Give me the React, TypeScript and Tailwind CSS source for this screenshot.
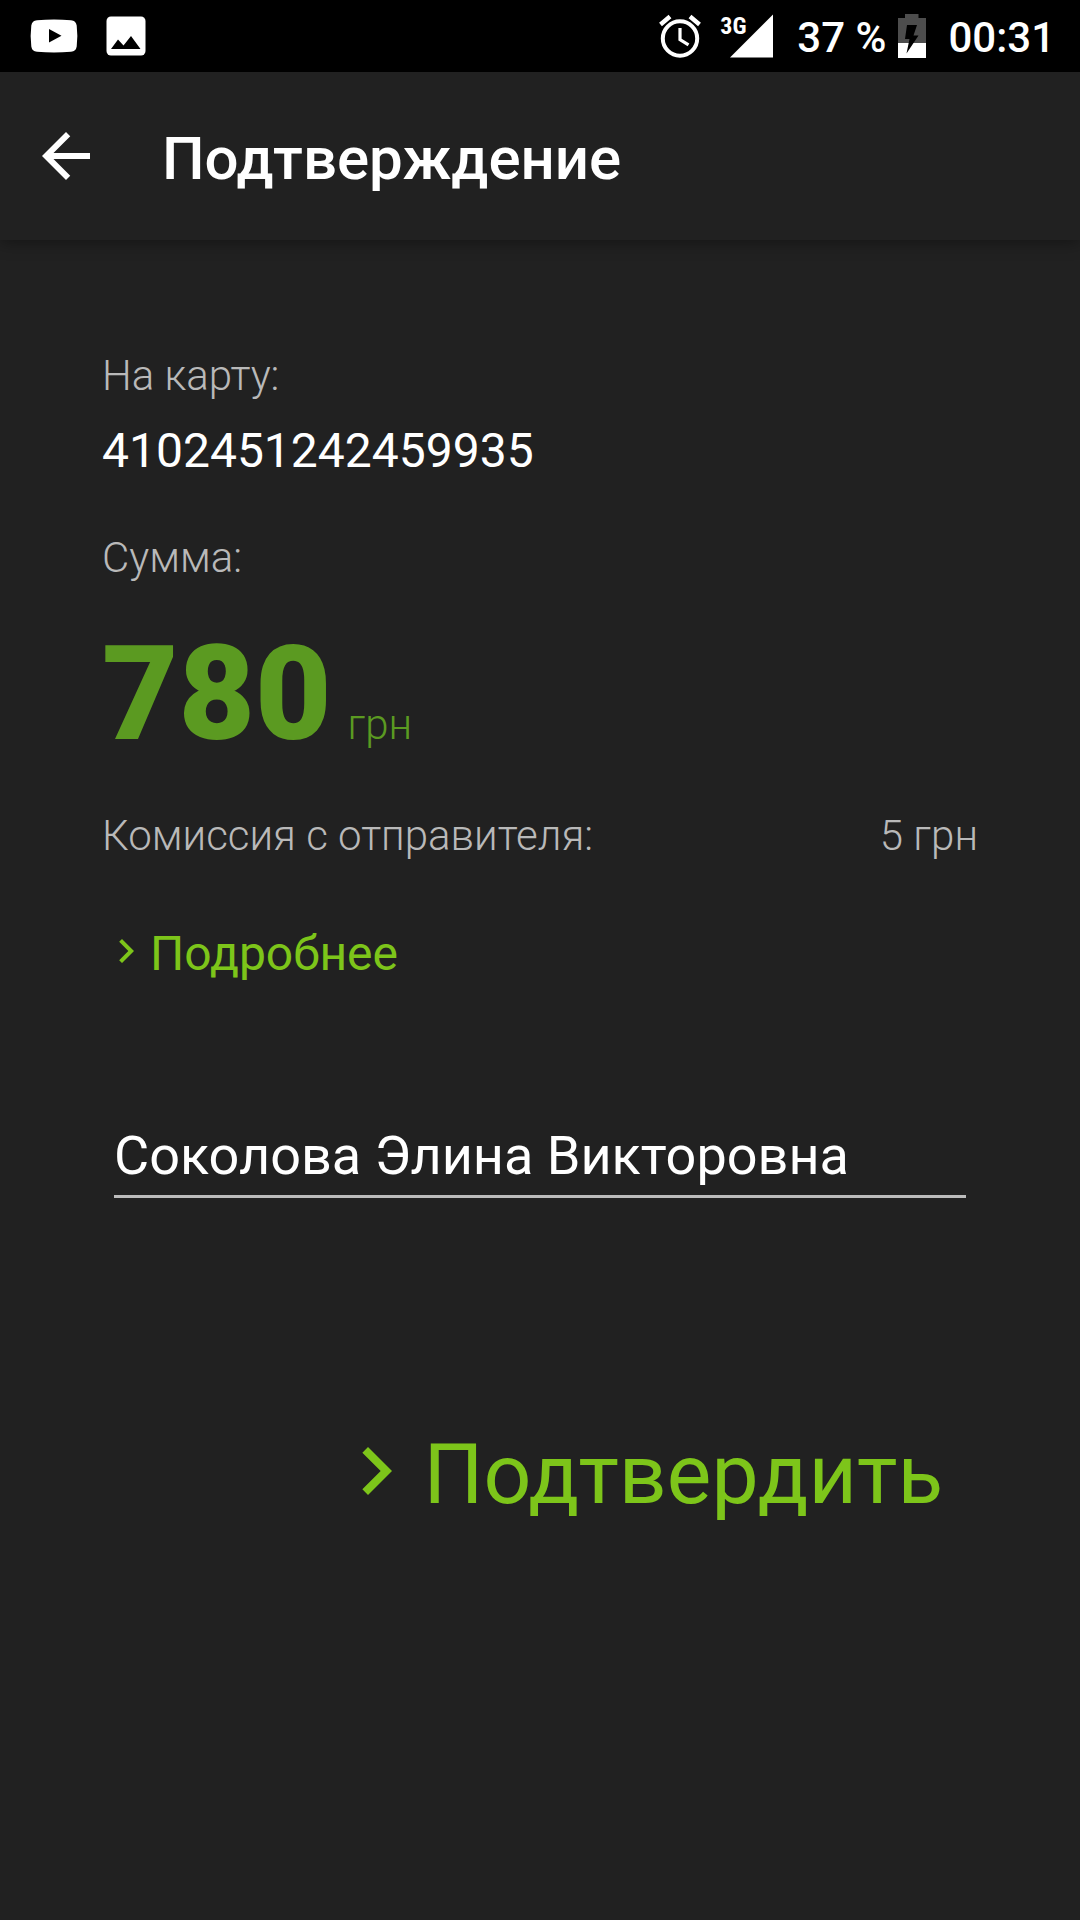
import React, { useState } from 'react';

interface IconProps {
  className?: string;
}

const ChevronIcon: React.FC<IconProps> = ({ className }) => (
  <svg className={className} viewBox="0 0 24 24" fill="currentColor" aria-hidden="true">
    <path d="M10 6 8.59 7.41 13.17 12l-4.58 4.59L10 18l6-6z" />
  </svg>
);

const BackIcon: React.FC<IconProps> = ({ className }) => (
  <svg className={className} viewBox="0 0 24 24" fill="currentColor" aria-hidden="true">
    <path d="M20 11H7.83l5.59-5.59L12 4l-8 8 8 8 1.41-1.41L7.83 13H20v-2z" />
  </svg>
);

const VideoIcon: React.FC<IconProps> = ({ className }) => (
  <svg className={className} viewBox="0 0 48 34" aria-hidden="true">
    <path
      fill="#fff"
      fillRule="evenodd"
      d="M7 1.2Q24 0 41 1.2Q46 1.6 46.7 6.5Q48 17 46.7 27.5Q46 32.4 41 32.8Q24 34 7 32.8Q2 32.4 1.3 27.5Q0 17 1.3 6.5Q2 1.6 7 1.2ZM19 10V23.5L31.500 16.7Z"
    />
  </svg>
);

const GalleryIcon: React.FC<IconProps> = ({ className }) => (
  <svg className={className} viewBox="0 0 40 40" aria-hidden="true">
    <rect x="0.5" y="0.5" width="39" height="39" rx="4.5" fill="#fff" />
    <path d="M5 33 12 23.5 17.5 29.5 25 20 34.5 33Z" fill="#000" />
  </svg>
);

const AlarmIcon: React.FC<IconProps> = ({ className }) => (
  <svg className={className} viewBox="0 0 44 44" fill="none" stroke="#fff" aria-hidden="true">
    <circle cx="22" cy="24.5" r="17.2" strokeWidth="4" />
    <path d="M22 14V25.5L30.5 30.8" strokeWidth="3.2" />
    <path d="M2.5 10.5 12 2.5M41.5 10.5 32 2.5" strokeWidth="4.4" />
  </svg>
);

const BatteryIcon: React.FC<IconProps> = ({ className }) => (
  <svg className={className} viewBox="0 0 28 44" aria-hidden="true">
    <path d="M7 0H20.5V4H28V44H0V4H7Z" fill="#4d4d4d" />
    <path d="M0 29H28V44H0Z" fill="#fff" />
    <path d="M9 11H19L15.5 21.5H20.5L8.5 39.5L11.5 25H7Z" fill="#000" />
  </svg>
);

const StatusBar: React.FC = () => (
  <div className="flex h-[72px] items-center justify-between bg-black pr-[25px] pl-[30px]">
    <div className="flex items-center gap-7">
      <VideoIcon className="h-[34px] w-12" />
      <GalleryIcon className="size-10" />
    </div>
    <div className="flex items-center text-[42px] leading-[50px] font-medium">
      <AlarmIcon className="size-11" />
      <div className="relative ml-[18px] h-11 w-[53px]">
        <svg className="size-full" viewBox="0 0 53 44" aria-hidden="true">
          <path d="M10 43.5H53V0.5Z" fill="#fff" />
        </svg>
        <span className="absolute top-0 left-0 font-['Roboto_Condensed',Roboto,sans-serif] text-[24px] leading-6 font-bold">
          3G
        </span>
      </div>
      <span className="ml-6 pt-1">37 %</span>
      <BatteryIcon className="ml-3 h-11 w-7" />
      <span className="ml-[22px] pt-1">00:31</span>
    </div>
  </div>
);

const Header: React.FC = () => (
  <header className="flex h-[168px] items-center gap-[60px] px-[30px] shadow-[0_2px_16px_rgba(0,0,0,0.4)]">
    <button type="button" aria-label="Назад" className="cursor-pointer">
      <BackIcon className="size-[72px]" />
    </button>
    <h1 className="pt-1.5 text-[60px] leading-[70px] font-medium">Подтверждение</h1>
  </header>
);

const App: React.FC = () => {
  const [name, setName] = useState('Соколова Элина Викторовна');

  return (
    <div className="min-h-screen bg-[#212121] font-[Roboto,sans-serif] text-white">
      <StatusBar />
      <Header />
      <main className="px-[102px] pt-[111px]">
        <section className="text-[42px] leading-[50px] font-light text-[#b9b9b9]">
          <p>На карту:</p>
          <p className="mt-[22px] text-[48px] leading-[56px] font-normal text-white">4102451242459935</p>
          <p className="mt-[54px]">Сумма:</p>
          <p className="mt-[33px] flex items-baseline gap-4 text-[#5b9a21]">
            <span className="text-[132px] leading-[156px] font-black">780</span>
            <span>грн</span>
          </p>
          <div className="mt-[39px] flex justify-between">
            <span>Комиссия с отправителя:</span>
            <span>5 грн</span>
          </div>
        </section>

        <button
          type="button"
          className="mt-[65px] flex cursor-pointer items-center text-[48px] leading-[56px] text-[#7dc51a]"
        >
          <ChevronIcon className="mb-1.5 size-12" />
          Подробнее
        </button>

        <div className="mx-3 mt-[142px]">
          <input
            type="text"
            aria-label="Имя получателя"
            value={name}
            onChange={(e) => setName(e.target.value)}
            className="block h-[74px] w-full border-b-[3px] border-[#bcbcbc] bg-transparent pb-2 text-[54px] leading-[64px] outline-none"
          />
        </div>

        <div className="mt-[225px] flex justify-end pr-[35px]">
          <button
            type="button"
            className="flex cursor-pointer items-center text-[84px] leading-[98px] text-[#7dc51a]"
          >
            <ChevronIcon className="mb-2 size-24" />
            Подтвердить
          </button>
        </div>
      </main>
    </div>
  );
};

export default App;
